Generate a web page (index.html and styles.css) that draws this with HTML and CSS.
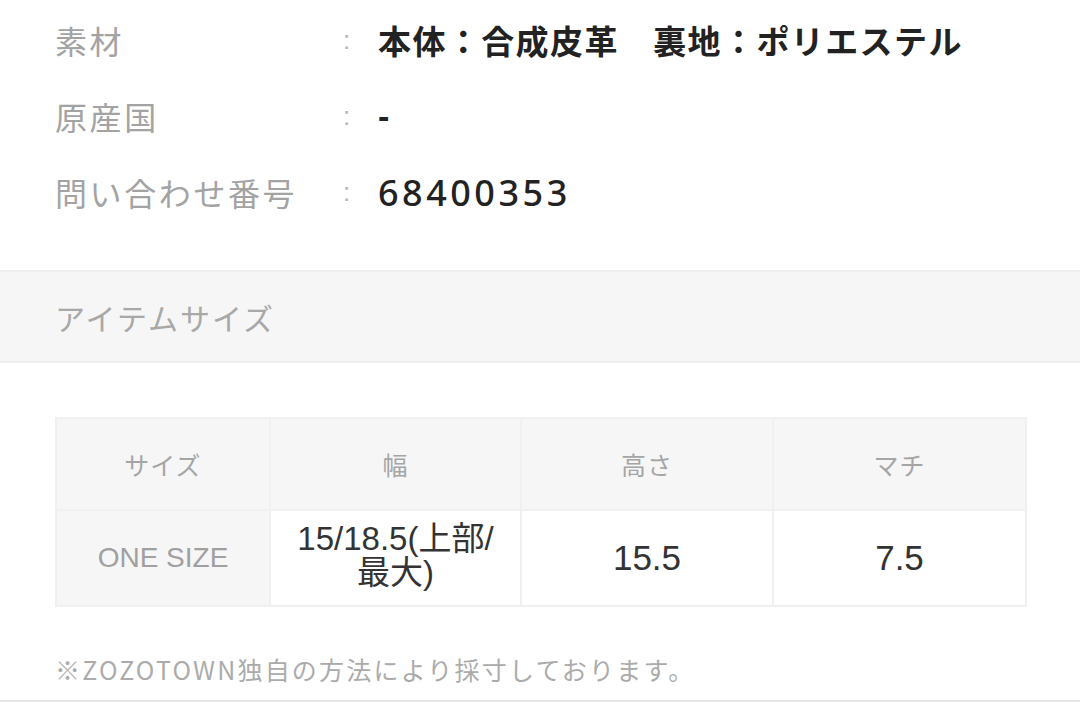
FILE: index.html
```html
<!DOCTYPE html>
<html lang="ja">
<head>
    <meta charset="UTF-8">
    <meta name="viewport" content="width=device-width, initial-scale=1.0">
    <title>アイテム詳細</title>
    <link rel="stylesheet" href="styles.css">
</head>
<body>
    <div class="page">
        <dl class="spec">
            <div class="spec-row">
                <dt class="spec-label">素材</dt>
                <dd class="spec-colon">:</dd>
                <dd class="spec-value">本体：合成皮革　裏地：ポリエステル</dd>
            </div>
            <div class="spec-row">
                <dt class="spec-label">原産国</dt>
                <dd class="spec-colon">:</dd>
                <dd class="spec-value dash">-</dd>
            </div>
            <div class="spec-row">
                <dt class="spec-label">問い合わせ番号</dt>
                <dd class="spec-colon">:</dd>
                <dd class="spec-value number">68400353</dd>
            </div>
        </dl>

        <div class="section-head">アイテムサイズ</div>

        <div class="size-wrap">
            <table class="size-table">
                <thead>
                    <tr>
                        <th class="col-size">サイズ</th>
                        <th class="col-w">幅</th>
                        <th class="col-h">高さ</th>
                        <th class="col-d">マチ</th>
                    </tr>
                </thead>
                <tbody>
                    <tr>
                        <th class="row-name">ONE SIZE</th>
                        <td class="val two-line">15/18.5(上部/<br>最大)</td>
                        <td class="val">15.5</td>
                        <td class="val">7.5</td>
                    </tr>
                </tbody>
            </table>
        </div>

        <p class="note">※ZOZOTOWN独自の方法により採寸しております。</p>
    </div>
</body>
</html>
```

FILE: styles.css
```css
:root {
    --label: #a3a3a3;
    --text: #222222;
    --band: #f6f6f6;
    --line: #eeeeee;
}

* {
    margin: 0;
    padding: 0;
    box-sizing: border-box;
}

body {
    background: #ffffff;
    font-family: "Liberation Sans", "Noto Sans CJK JP", sans-serif;
    color: var(--text);
    width: 1080px;
    height: 702px;
    overflow: hidden;
}

.page {
    height: 702px;
    border-bottom: 2px solid #e6e6e6;
}

/* spec list */
.spec {
    padding: 2px 0 0 55px;
}

.spec-row {
    display: grid;
    grid-template-columns: 284px 39px 1fr;
    align-items: center;
    height: 76px;
}

.spec-label {
    font-family: "Noto Sans CJK JP", sans-serif;
    font-size: 32px;
    letter-spacing: 2.6px;
    color: var(--label);
}

.spec-colon {
    font-size: 26px;
    color: #b5b5b5;
    padding-left: 4px;
}

.spec-value {
    font-family: "Noto Sans CJK JP", sans-serif;
    font-size: 33px;
    font-weight: 700;
    letter-spacing: 1.4px;
    color: var(--text);
}

.spec-value.dash {
    font-family: "Liberation Sans", sans-serif;
    font-size: 34px;
}

.spec-value.number {
    font-family: "Noto Sans", sans-serif;
    font-size: 36px;
    font-weight: 500;
    letter-spacing: 3.5px;
}

/* section band */
.section-head {
    margin-top: 40px;
    height: 93px;
    display: flex;
    align-items: center;
    padding-left: 55px;
    background: var(--band);
    border-top: 2px solid var(--line);
    border-bottom: 2px solid var(--line);
    font-family: "Noto Sans CJK JP", sans-serif;
    font-size: 30px;
    letter-spacing: 2px;
    color: #a8a8a8;
}

/* size table */
.size-wrap {
    padding: 54px 55px 0;
}

.size-table {
    width: 970px;
    border-collapse: collapse;
    table-layout: fixed;
}

.size-table th,
.size-table td {
    border: 2px solid #f0f0f0;
    text-align: center;
    vertical-align: middle;
    font-weight: 400;
}

.size-table thead th {
    height: 92px;
    background: var(--band);
    font-family: "Noto Sans CJK JP", sans-serif;
    font-size: 25px;
    letter-spacing: 1px;
    color: #a5a5a5;
}

.col-size { width: 214px; }
.col-w { width: 251px; }
.col-h { width: 252px; }
.col-d { width: 253px; }

.size-table tbody th,
.size-table tbody td {
    height: 96px;
}

.row-name {
    background: var(--band);
    font-size: 28px;
    color: #a0a0a0;
}

.val {
    background: #ffffff;
    font-size: 35px;
    color: #333333;
}

.two-line {
    font-size: 33px;
    line-height: 34px;
    padding-bottom: 4px;
}

.note {
    margin-top: 44px;
    padding-left: 55px;
    font-family: "Noto Sans CJK JP", sans-serif;
    font-size: 25px;
    letter-spacing: 2.2px;
    color: #ababab;
}
```
